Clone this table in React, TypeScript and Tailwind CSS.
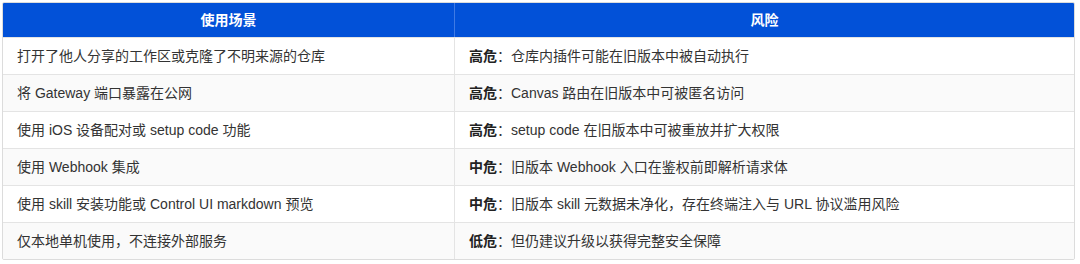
import React from "react";

type Row = {
  scene: string;
  level: string;
  risk: string;
};

const rows: Row[] = [
  { scene: "打开了他人分享的工作区或克隆了不明来源的仓库", level: "高危", risk: "仓库内插件可能在旧版本中被自动执行" },
  { scene: "将 Gateway 端口暴露在公网", level: "高危", risk: "Canvas 路由在旧版本中可被匿名访问" },
  { scene: "使用 iOS 设备配对或 setup code 功能", level: "高危", risk: "setup code 在旧版本中可被重放并扩大权限" },
  { scene: "使用 Webhook 集成", level: "中危", risk: "旧版本 Webhook 入口在鉴权前即解析请求体" },
  {
    scene: "使用 skill 安装功能或 Control UI markdown 预览",
    level: "中危",
    risk: "旧版本 skill 元数据未净化，存在终端注入与 URL 协议滥用风险",
  },
  { scene: "仅本地单机使用，不连接外部服务", level: "低危", risk: "但仍建议升级以获得完整安全保障" },
];

const App: React.FC = () => {
  return (
    <div className="w-[1080px] h-[264px] bg-white pt-[2px] pl-[2px] font-['Liberation_Sans','Noto_Sans_CJK_SC',sans-serif]">
      <div className="w-[1073px] border border-[#dcdcdc] rounded-[2px] overflow-hidden text-[14px] text-[#333]">
        {/* Header */}
        <div className="grid grid-cols-[452px_1fr] h-[34px] bg-[#0251d8] text-white font-bold">
          <div className="flex items-center justify-center border-r border-[#3f7ae4]">使用场景</div>
          <div className="flex items-center justify-center">风险</div>
        </div>

        {rows.map((row, i) => (
          <div
            key={i}
            className={`grid grid-cols-[452px_1fr] h-[37px] border-t border-[#e4e4e4] ${
              i % 2 === 1 ? "bg-[#fafafa]" : "bg-white"
            }`}
          >
            <div className="flex items-center pl-[14px] border-r border-[#e4e4e4]">{row.scene}</div>
            <div className="flex items-center pl-[14px]">
              <span className="font-bold text-[#222]">{row.level}</span>
              <span>：{row.risk}</span>
            </div>
          </div>
        ))}
      </div>
    </div>
  );
};

export default App;
